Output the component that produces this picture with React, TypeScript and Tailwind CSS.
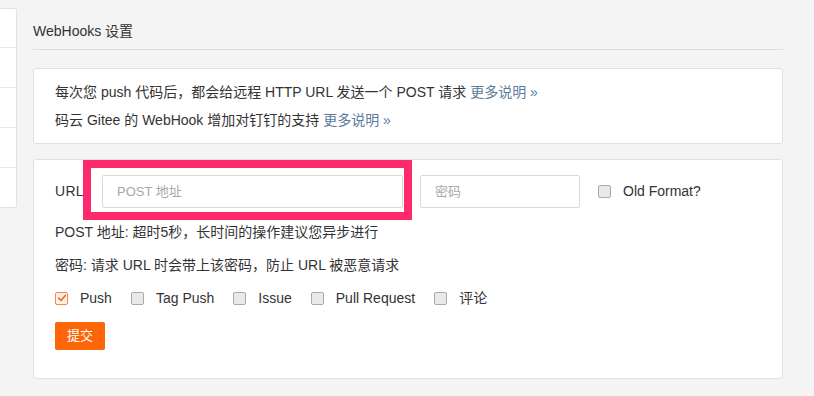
import React from "react";

const FONT = "font-['Helvetica_Neue','Liberation_Sans','Noto_Sans_CJK_SC',sans-serif]";

// --- small pieces ---
function Checkbox({ checked = false }: { checked?: boolean }) {
  if (checked) {
    return (
      <span className="flex h-[13px] w-[13px] shrink-0 items-center justify-center rounded-[2px] border border-[#f0884a] bg-[#fdf1ea]">
        <svg viewBox="0 0 12 12" className="h-[10px] w-[10px]">
          <path d="M2 6.2 L4.8 9 L10 3" fill="none" stroke="#f26a10" strokeWidth="2" strokeLinecap="round" strokeLinejoin="round" />
        </svg>
      </span>
    );
  }
  return <span className="block h-[13px] w-[13px] shrink-0 rounded-[2px] border border-[#a9a9a9] bg-[#e9e9e9]" />;
}

function CheckItem({ label, checked }: { label: string; checked?: boolean }) {
  return (
    <label className="mr-[19px] flex items-center gap-[12px]">
      <Checkbox checked={checked} />
      <span>{label}</span>
    </label>
  );
}

export default function App() {
  const events = [
    { label: "Push", checked: true },
    { label: "Tag Push" },
    { label: "Issue" },
    { label: "Pull Request" },
    { label: "评论" },
  ];

  return (
    <div className={`flex h-[396px] w-[814px] overflow-hidden bg-[#f4f4f4] text-[14px] text-[#333] ${FONT}`}>
      {/* sidebar (cut off on the left) */}
      <div className="mt-[8px] h-[200px] w-[17px] shrink-0 overflow-hidden rounded-r-[3px] border-y border-r border-[#e1e1e1] bg-white">
        <div className="h-[39px] border-b border-[#e6e6e6]" />
        <div className="h-[40px] border-b border-[#e6e6e6]" />
        <div className="h-[40px] border-b border-[#e6e6e6]" />
        <div className="h-[40px] border-b border-[#e6e6e6]" />
        <div className="h-[39px]" />
      </div>

      {/* main */}
      <div className="ml-[16px] w-[750px] shrink-0">
        <div className="border-b border-[#dcdcdc] pt-[22px] pb-[9px] leading-[18px]">WebHooks 设置</div>

        <div className="mt-[18px] rounded-[3px] border border-[#e0e0e0] bg-white py-[9px] pl-[21px] leading-[28px]">
          <p>
            每次您 push 代码后，都会给远程 HTTP URL 发送一个 POST 请求{" "}
            <a className="text-[#5a7b99]">更多说明 »</a>
          </p>
          <p>
            码云 Gitee 的 WebHook 增加对钉钉的支持 <a className="text-[#5a7b99]">更多说明 »</a>
          </p>
        </div>

        <div className="mt-[15px] rounded-[3px] border border-[#e0e0e0] bg-white px-[21px] pt-[15px] pb-[28px]">
          <div className="flex items-center">
            <span className="w-[47px] shrink-0 tracking-[0.3px]">URL:</span>
            <div className="relative">
              <input
                className="block h-[33px] w-[301px] rounded-[2px] border border-[#d9d9d9] pl-[14px] text-[13px] outline-none placeholder:text-[#a8a8a8]"
                placeholder="POST 地址"
              />
              {/* highlight frame over the URL field */}
              <div className="pointer-events-none absolute top-[-15px] right-[-9px] bottom-[-12px] left-[-19px] border-[8px] border-[#fd2b6d]" />
            </div>
            <input
              className="ml-[17px] block h-[33px] w-[160px] rounded-[2px] border border-[#d9d9d9] pl-[14px] text-[13px] outline-none placeholder:text-[#a8a8a8]"
              placeholder="密码"
            />
            <label className="ml-[18px] flex items-center gap-[12px] self-start pt-[6px]">
              <Checkbox />
              <span>Old Format?</span>
            </label>
          </div>

          <p className="mt-[14px] leading-[20px]">POST 地址: 超时5秒，长时间的操作建议您异步进行</p>
          <p className="mt-[13px] leading-[20px]">密码: 请求 URL 时会带上该密码，防止 URL 被恶意请求</p>

          <div className="mt-[13px] flex h-[20px] items-center">
            {events.map((e) => (
              <CheckItem key={e.label} label={e.label} checked={e.checked} />
            ))}
          </div>

          <button className="mt-[14px] h-[28px] w-[50px] rounded-[2px] bg-[#fc6508] text-[13px] text-white">提交</button>
        </div>
      </div>
    </div>
  );
}
